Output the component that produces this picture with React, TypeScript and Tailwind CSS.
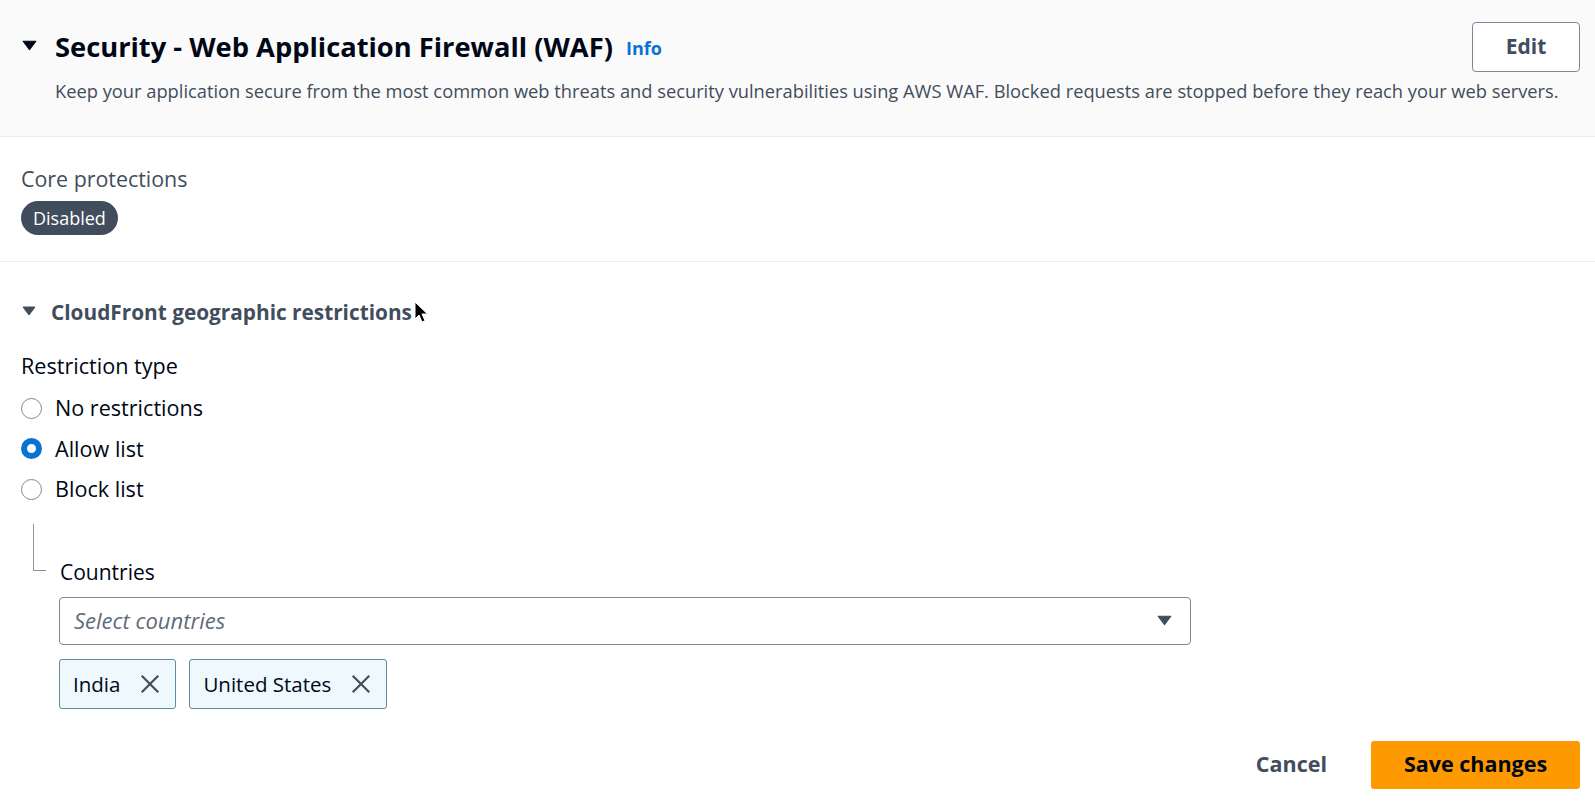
import React from "react";

const Caret = ({ className = "" }: { className?: string }) => (
  <svg viewBox="0 0 16 16" className={className}>
    <path d="M2 4h12l-6 8z" fill="currentColor" stroke="currentColor" strokeWidth="1" strokeLinejoin="round" />
  </svg>
);

const XIcon = () => (
  <svg viewBox="0 0 24 24" className="w-[22px] h-[22px]" fill="none" stroke="#414d5c" strokeWidth="2.4">
    <path d="M3 3l18 18M21 3L3 21" />
  </svg>
);

const Radio = ({ checked, label }: { checked?: boolean; label: string }) => (
  <div className="flex items-center h-[40.5px]">
    {checked ? (
      <span className="w-[21px] h-[21px] rounded-full border-[6px] border-[#0972d3] bg-white box-border" />
    ) : (
      <span className="w-[21px] h-[21px] rounded-full border-[1.5px] border-[#7d8998] bg-white box-border" />
    )}
    <span className="ml-[13px] text-[21.6px] text-[#000716] leading-[26px]">{label}</span>
  </div>
);

const Token = ({ label }: { label: string }) => (
  <div className="flex items-center h-[50px] pl-[13px] pr-[14px] bg-[#eff8fd] border border-[#5f8ba3] rounded-[3px]">
    <span className="text-[20.5px] text-[#000716] leading-[26px]">{label}</span>
    <span className="ml-[19px] flex items-center">
      <XIcon />
    </span>
  </div>
);

export default function App() {
  return (
    <div className="w-[1595px] h-[807px] bg-white relative overflow-hidden" style={{ fontFamily: "'Open Sans', Roboto, sans-serif" }}>
      <div className="bg-[#fafafa] border-b border-[#e9ebed] h-[137px] pl-[21px] pr-[15px] pt-[22px]">
        <div className="flex items-center h-[50px]">
          <Caret className="w-[17px] h-[17px] text-[#000716] mt-[-4px]" />
          <h2 className="ml-[17px] text-[27.3px] font-bold text-[#000716] leading-[34px]">
            Security - Web Application Firewall (WAF)
          </h2>
          <span className="ml-[13px] mt-[3px] text-[18px] font-bold text-[#0972d3]">Info</span>
          <div className="flex-1" />
          <button className="w-[108px] h-[50px] border border-[#7d8998] rounded-[4px] bg-white text-[21px] font-bold text-[#414d5c]">
            Edit
          </button>
        </div>
        <p className="ml-[34px] mt-[6.5px] text-[18.3px] leading-[24px] text-[#414d5c] whitespace-nowrap">
          Keep your application secure from the most common web threats and security vulnerabilities using AWS WAF. Blocked requests are stopped before they reach your web servers.
        </p>
      </div>

      <div className="pl-[21px] pt-[29px] h-[125px] border-b border-[#e9ebed]">
        <div className="text-[21.4px] text-[#414d5c] leading-[26px]">Core protections</div>
        <div className="mt-[9px] inline-flex items-center h-[34px] px-[12px] rounded-full bg-[#414d5c] text-white text-[18px]">
          Disabled
        </div>
      </div>

      <div className="pl-[21px] pr-[15px]">
        <div className="flex items-center mt-[36px] h-[28px]">
          <Caret className="w-[16px] h-[16px] text-[#414d5c] mt-[-3px]" />
          <span className="ml-[14px] text-[20.8px] font-bold text-[#414d5c] leading-[28px]">CloudFront geographic restrictions</span>
        </div>

        <div className="mt-[27px] text-[21.6px] text-[#000716] leading-[26px]">Restriction type</div>
        <div className="mt-[9px] flex flex-col">
          <Radio label="No restrictions" />
          <Radio checked label="Allow list" />
          <Radio label="Block list" />
        </div>

        <div className="flex mt-[14px]">
          <div className="w-[13px] ml-[12px] h-[47px] border-l border-b border-[#879596] mr-[14px]" />
          <div className="pt-[35px]">
            <div className="text-[21px] text-[#000716] leading-[26px]">Countries</div>
          </div>
        </div>
        <div className="ml-[38px] mt-[12px]">
          <div className="w-[1132px] h-[48px] border border-[#7d8998] rounded-[4px] flex items-center justify-between pl-[14px] pr-[17px]">
            <span className="text-[22px] italic text-[#5f6b7a]">Select countries</span>
            <Caret className="w-[17px] h-[17px] text-[#414d5c]" />
          </div>
          <div className="flex gap-[13px] mt-[14px]">
            <Token label="India" />
            <Token label="United States" />
          </div>
        </div>

        <div className="flex justify-end items-center mt-[32px]">
          <button className="text-[21.5px] font-bold text-[#414d5c] mr-[44px]">Cancel</button>
          <button className="w-[209px] h-[48px] rounded-[3px] bg-[#ff9900] text-[21.5px] font-bold text-[#000716]">
            Save changes
          </button>
        </div>
      </div>

      <svg className="absolute left-[414px] top-[301px]" width="14" height="22" viewBox="0 0 14 22">
        <path d="M1 1v17l4-4 3 7 3-1.3-3-6.7h5.5z" fill="#000" stroke="#fff" strokeWidth="1" />
      </svg>
    </div>
  );
}
